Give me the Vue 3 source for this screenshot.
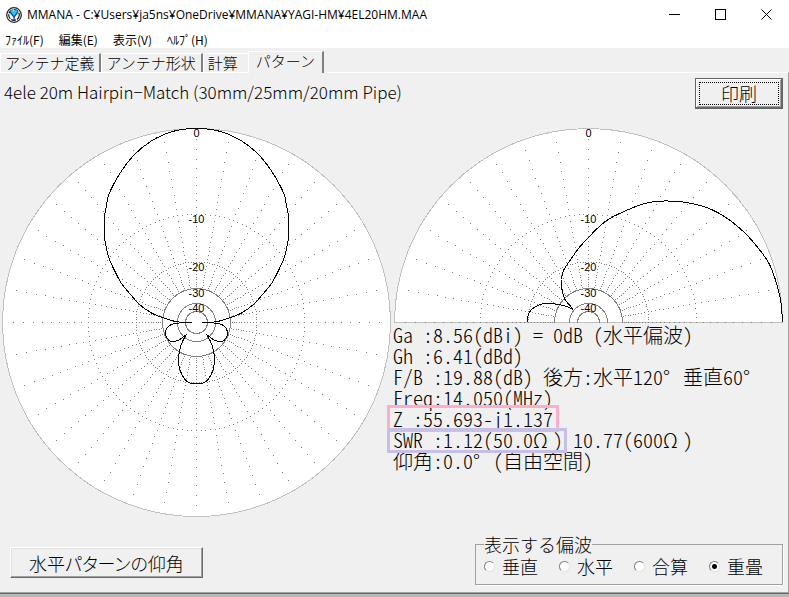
<script setup>
import { ref } from 'vue'

const menus = ['ﾌｧｲﾙ(F)', '編集(E)', '表示(V)', 'ﾍﾙﾌﾟ(H)']
const tabs = ['アンテナ定義', 'アンテナ形状', '計算', 'パターン']
const activeTab = ref('パターン')
const polarizations = ['垂直', '水平', '合算', '重畳']
const polarization = ref('重畳')

const R = 194
const radiusAt = (db) => R * Math.pow(0.89, db / 2)
const labels = [0, 10, 20, 30, 40].map((db) => ({
  text: db ? '-' + db : '0',
  r: Math.round(radiusAt(db)),
}))
const innerRings = [30, 40, 50].map((db) => Math.round(radiusAt(db)))

// One-pixel dots: spokes every 10 degrees with a dot per dB, and the -10/-20 dB rings.
function gridDots(cx, cy, half) {
  const dots = []
  const put = (deg, r) => {
    const a = (deg * Math.PI) / 180
    dots.push(`M${Math.floor(cx + r * Math.cos(a))} ${Math.floor(cy - r * Math.sin(a))}h1v1h-1z`)
  }
  const end = half ? 180 : 359
  for (let deg = 0; deg <= end; deg += 10) {
    for (let db = 1; db < 30; db++) put(deg, radiusAt(db))
  }
  for (let deg = 0; deg <= end; deg += 2.5) {
    put(deg, radiusAt(10))
    put(deg, radiusAt(20))
  }
  return dots.join('')
}

// Smooth curve through measured points (Catmull-Rom to Bezier).
function curve(points) {
  let d = `M${points[0][0]} ${points[0][1]}`
  for (let i = 0; i < points.length - 1; i++) {
    const p0 = points[i - 1] || points[i]
    const p1 = points[i]
    const p2 = points[i + 1]
    const p3 = points[i + 2] || p2
    const c = [
      p1[0] + (p2[0] - p0[0]) / 6, p1[1] + (p2[1] - p0[1]) / 6,
      p2[0] - (p3[0] - p1[0]) / 6, p2[1] - (p3[1] - p1[1]) / 6,
      p2[0], p2[1],
    ]
    d += 'C' + c.map((n) => n.toFixed(1)).join(' ')
  }
  return d
}

// Offsets from the plot centre, y downwards.
const mainLobe = [
  [0, -194], [-10, -193.5], [-20, -192], [-30, -189], [-46, -181], [-62, -168], [-74, -153],
  [-83, -138], [-88, -127], [-90, -117], [-92, -105], [-92, -86], [-90, -74], [-87, -63],
  [-81, -50], [-75, -39], [-66, -28], [-57, -18], [-45, -9.5], [-34, -5], [-23, -1.5], [-14, 0], [-5, 0],
]
const sideLobe = [
  [-12, 0], [-19, 0.7], [-26, 2.5], [-30, 6.5], [-31, 12], [-29, 16], [-26, 19],
  [-21.5, 19], [-16, 16.5], [-10, 12],
]
const backLobe = [
  [-10, 12], [-14, 19], [-17, 28], [-18, 39], [-16, 49], [-11.5, 57], [-6.5, 60.5], [0, 61.5],
]
const horizontal = [mainLobe, sideLobe, backLobe].flatMap((lobe) => [
  curve(lobe),
  curve(lobe.map(([x, y]) => [-x, y])),
])

const vertical = [
  curve([
    [194, 0], [193, -16], [191, -28], [186.5, -44], [180, -60], [170, -74], [157.5, -88.5],
    [143, -101], [130, -109.5], [118, -115], [103, -119], [91, -121], [79, -121.5], [66, -121],
    [53, -118], [40, -113], [23, -105], [13, -98], [-3, -82], [-10, -74], [-18.5, -62],
    [-25, -52], [-27, -43], [-26.5, -33], [-23.5, -23], [-19, -17.5], [-15, -13],
  ]),
  curve([
    [-15, -13], [-25, -17], [-33.5, -18.5], [-46.5, -18.5], [-54.5, -15], [-58.5, -11],
    [-60.5, -6], [-61, 0],
  ]),
]

const plots = [
  { name: '水平面パターン', cx: 196.5, height: 390, half: false, traces: horizontal },
  { name: '垂直面パターン', cx: 194.5, height: 196, half: true, traces: vertical },
].map((p) => ({ ...p, dots: gridDots(p.cx, 194.5, p.half) }))

const [hPlot, vPlot] = plots
</script>

<template>
  <div class="window">
    <header class="titlebar">
      <svg class="logo" viewBox="0 0 16 16" width="16" height="16" aria-hidden="true">
        <circle cx="8" cy="8" r="7.3" fill="#fff" stroke="#222" stroke-width="1.2" />
        <circle cx="8" cy="8" r="5.3" fill="#fff" stroke="#111" stroke-width="1.2" stroke-dasharray="5 1" />
        <path d="M3.8 4.2 6 3l2 1 2-1 2.2 1.2-.4 3L9.500 9 8 11.500 6.500 9 4.200 7.200z" fill="#19d3ee" />
        <path d="M4 4.500 8 10l4-5.500M8 9v4" fill="none" stroke="#1530b8" stroke-width="1.200" />
      </svg>
      <h1 class="title">MMANA - C:¥Users¥ja5ns¥OneDrive¥MMANA¥YAGI-HM¥4EL20HM.MAA</h1>
      <div class="controls">
        <button type="button" aria-label="最小化">
          <svg viewBox="0 0 11 11" width="11" height="11"><path d="M0 5.500h11" /></svg>
        </button>
        <button type="button" aria-label="最大化">
          <svg viewBox="0 0 11 11" width="11" height="11"><path d="M.5.5h10v10H.5z" /></svg>
        </button>
        <button type="button" aria-label="閉じる">
          <svg viewBox="0 0 11 11" width="11" height="11"><path class="smooth" d="M.5.5l10 10M10.500.5l-10 10" /></svg>
        </button>
      </div>
    </header>

    <nav class="menubar">
      <button v-for="m in menus" :key="m" type="button">{{ m }}</button>
    </nav>

    <div class="tabs" role="tablist">
      <button
        v-for="t in tabs"
        :key="t"
        type="button"
        role="tab"
        :aria-selected="activeTab === t"
        :class="{ active: activeTab === t }"
        @click="activeTab = t"
      >{{ t }}</button>
    </div>

    <main class="page">
      <div class="heading">
        <p class="antenna">4ele 20m Hairpin−Match (30mm/25mm/20mm Pipe)</p>
        <button type="button" class="btn default"><span>印刷</span></button>
      </div>

      <div class="plots">
        <svg class="plot" :viewBox="`0 0 394 ${hPlot.height}`" role="img" :aria-label="hPlot.name">
          <circle class="disc" :cx="hPlot.cx" cy="194.5" r="194" />
          <path class="dots" :d="hPlot.dots" />
          <circle v-for="r in innerRings" :key="r" class="ring" :cx="hPlot.cx" cy="194.500" :r="r" />
          <text v-for="l in labels" :key="l.text" :x="hPlot.cx" :y="203 - l.r">{{ l.text }}</text>
          <g :transform="`translate(${hPlot.cx} 194.5)`">
            <path v-for="d in hPlot.traces" :key="d" class="trace" :d="d" />
          </g>
        </svg>

        <div class="side">
          <svg class="plot" :viewBox="`0 0 394 ${vPlot.height}`" role="img" :aria-label="vPlot.name">
            <path class="disc" d="M.5 194.500a194 194 0 0 1 388 0z" />
            <path class="dots" :d="vPlot.dots" />
            <path
              v-for="r in innerRings"
              :key="r"
              class="ring"
              :d="`M${vPlot.cx - r} 194.500a${r} ${r} 0 0 1 ${2 * r} 0`"
            />
            <text v-for="l in labels" :key="l.text" :x="vPlot.cx" :y="203 - l.r">{{ l.text }}</text>
            <g :transform="`translate(${vPlot.cx} 194.5)`">
              <path v-for="d in vPlot.traces" :key="d" class="trace" :d="d" />
            </g>
          </svg>

          <div class="readout">
            <p>Ga  :8.56(dBi) = 0dB  (水平偏波)</p>
            <p>Gh  :6.41(dBd)</p>
            <p>F/B :19.88(dB) 後方:水平120<i>°</i>垂直60<i>°</i></p>
            <p>Freq:14.050(MHz)</p>
            <p><mark class="pink">Z   :55.693-j1.137</mark></p>
            <p><mark class="violet">SWR :1.12(50.0<i>Ω</i>)</mark> 10.77(600<i>Ω</i>)</p>
            <p>仰角:0.0<i>°</i>(自由空間)</p>
          </div>
        </div>
      </div>

      <div class="footer">
        <button type="button" class="btn">水平パターンの仰角</button>
        <fieldset>
          <legend>表示する偏波</legend>
          <label v-for="p in polarizations" :key="p">
            <input v-model="polarization" type="radio" name="polarization" :value="p" />{{ p }}
          </label>
        </fieldset>
      </div>
    </main>
    <div class="edge"></div>
  </div>
</template>

<style>
body {
  margin: 0;
  background: #fff;
}
</style>

<style scoped>
.window {
  font-family: "Noto Sans CJK JP", sans-serif;
  font-weight: 300;
  color: #000;
  background: #fff;
}
p, h1 {
  margin: 0;
  font-weight: inherit;
}
button {
  font: inherit;
  color: inherit;
  border: 0;
  padding: 0;
  background: none;
}

.titlebar {
  display: flex;
  align-items: center;
  height: 29px;
  padding-left: 6px;
}
.logo {
  margin-right: 5px;
}
.title {
  flex: 1;
  font: 12px/16px "Open Sans", "Noto Sans CJK JP", sans-serif;
  white-space: nowrap;
}
.controls {
  display: flex;
}
.controls button {
  display: grid;
  place-items: center;
  width: 46px;
  height: 29px;
}
.controls path {
  fill: none;
  stroke: #000;
  shape-rendering: crispEdges;
}
.controls .smooth {
  shape-rendering: auto;
}

.menubar {
  display: flex;
  gap: 15px;
  height: 19px;
  padding-left: 5px;
  font: 12px/21px "Noto Sans CJK JP", sans-serif;
}

.tabs {
  display: flex;
  align-items: flex-end;
  height: 24px;
  background: #f0f0f0;
  font-size: 15px;
  line-height: 18px;
}
.tabs button {
  height: 19px;
  padding: 0 5px 0 4px;
  border: 1px solid #fff;
  border-right: 2px solid #808080;
  border-bottom: 0;
}
.tabs button:nth-child(3) {
  padding-right: 10px;
  border-right: 0;
}
.tabs .active {
  height: 22px;
  padding: 0 7px;
  margin-bottom: -1px;
  padding-bottom: 4px;
  background: #f0f0f0;
}

.page {
  border-top: 1px solid #fff;
  border-right: 1px solid #a0a0a0;
  background: #f0f0f0;
}
.heading {
  display: flex;
  justify-content: space-between;
  align-items: flex-start;
  height: 50px;
  padding: 5px 5px 0 4px;
}
.antenna {
  font-size: 17px;
  line-height: 28px;
}
.btn {
  height: 31px;
  padding: 0 18px;
  border: 1px solid;
  border-color: #fff #696969 #696969 #fff;
  box-shadow: inset -1px -1px #a0a0a0, inset 1px 1px #e3e3e3;
  background: #f0f0f0;
  font-size: 18px;
  line-height: 26px;
  font-feature-settings: "palt";
}
.btn.default {
  padding: 2px;
  border-color: #646464;
  box-shadow: inset -1px -1px #696969, inset 1px 1px #fff, inset -2px -2px #a0a0a0;
}
.default span {
  display: block;
  width: 78px;
  margin: 1px;
  border: 1px dotted #000;
  line-height: 21px;
}

.plots {
  display: grid;
  grid-template-columns: minmax(0, 1fr) minmax(0, 1fr);
}
.plot {
  display: block;
  width: 100%;
}
.disc {
  fill: #fff;
  stroke: #c0c0c0;
  shape-rendering: crispEdges;
}
.dots {
  fill: #808080;
  shape-rendering: crispEdges;
}
.ring {
  fill: none;
  stroke: #808080;
  shape-rendering: crispEdges;
}
.trace {
  fill: none;
  stroke: #000;
  shape-rendering: crispEdges;
}
.plot text {
  font: 11px "Liberation Sans", sans-serif;
  text-anchor: middle;
}

.readout {
  margin-left: -1px;
  font-size: 20px;
  line-height: 21px;
  font-feature-settings: "hwid";
  white-space: pre;
}
.readout p {
  height: 21px;
}
.readout i {
  display: inline-block;
  width: 20px;
  font-style: normal;
}
mark {
  position: relative;
  background: none;
  color: inherit;
}
mark::after {
  content: "";
  position: absolute;
  inset: 1px -6px 1px -6px;
  border: 3px solid #ffaec9;
}
.violet::after {
  inset: 3px -4px 1px -6px;
  border-color: #c8bfe7;
}

.footer {
  display: flex;
  justify-content: space-between;
  align-items: flex-end;
  padding: 17px 5px 7px 10px;
}
.footer .btn {
  margin-bottom: 7px;
}
fieldset {
  display: flex;
  margin: 0;
  padding: 0 19px 4px 8px;
  border: 1px solid #a0a0a0;
  box-shadow: 1px 1px #fff;
  font-size: 18px;
}
legend {
  padding: 0;
  line-height: 18px;
}
label {
  display: flex;
  align-items: center;
  gap: 7px;
  width: 75px;
  line-height: 27px;
}
label:last-child {
  width: auto;
}
input {
  appearance: none;
  flex: none;
  width: 11px;
  height: 11px;
  margin: 0;
  border: 1px solid;
  border-color: #808080 #e3e3e3 #e3e3e3 #808080;
  border-radius: 50%;
  background: #fff;
}
input:checked {
  background: radial-gradient(circle, #000 2px, #fff 3px);
}

.edge {
  height: 4px;
  border-top: 1px solid #a0a0a0;
  background: linear-gradient(#696969 1px, #b8b8b8 1px);
}
</style>
